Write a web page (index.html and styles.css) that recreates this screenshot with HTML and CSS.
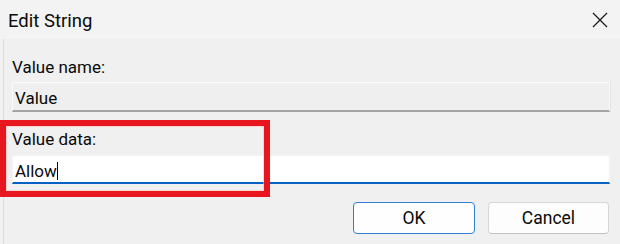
FILE: index.html
```html
<!DOCTYPE html>
<html>
<head>
<meta charset="utf-8">
<link rel="stylesheet" href="styles.css">
</head>
<body>
<div class="window">
  <div class="titlebar">
    <span class="title">Edit String</span>
    <svg class="close" width="16" height="16" viewBox="0 0 16 16"><path d="M1 1 L15 15 M15 1 L1 15" stroke="#1b1b1b" stroke-width="1.3" fill="none"/></svg>
  </div>
  <div class="content">
    <div class="label first">Value name:</div>
    <div class="field readonly">Value</div>
    <div class="label second">Value data:</div>
    <div class="field active">Allow<span class="caret"></span></div>
    <div class="buttons">
      <button class="btn ok">OK</button>
      <button class="btn cancel">Cancel</button>
    </div>
  </div>
  <div class="highlight"></div>
</div>
</body>
</html>
```
FILE: styles.css
```css
html, body {
  margin: 0;
  padding: 0;
  background: #f0f0f0;
}
.window {
  position: relative;
  width: 620px;
  height: 244px;
  overflow: hidden;
  font-family: Roboto, "Liberation Sans", sans-serif;
  color: #0a0a0a;
}
.titlebar {
  height: 39px;
  background: #f3f3f3;
  display: flex;
  align-items: center;
  justify-content: space-between;
  padding: 0 12px 0 8px;
  box-sizing: border-box;
}
.title {
  font-size: 18.5px;
  line-height: 20px;
  margin-top: 2px;
}
.close {
  display: block;
  margin-top: 1px;
}
.content {
  margin-left: 3px;
  border-left: 1px solid #dedede;
  padding: 0 10px 0 8px;
  height: 205px;
}
.label {
  font-size: 17px;
  line-height: 20px;
}
.label.first {
  padding-top: 18px;
}
.label.second {
  margin-top: 17px;
}
.field {
  box-sizing: border-box;
  font-size: 17px;
  line-height: 20px;
  padding: 6px 0 0 2px;
}
.field.readonly {
  margin-top: 5px;
  height: 30px;
  background: #efefef;
  border: 1px solid #fafafa;
  border-bottom: 2px solid #a3a3a3;
  box-shadow: 1px 0 0 #e2e2e2;
  padding-top: 5px;
}
.field.active {
  margin-top: 6px;
  height: 29px;
  background: #ffffff;
  border: 1px solid #f4f4f4;
  border-bottom: 2px solid #0562c2;
  padding-top: 5px;
}
.caret {
  display: inline-block;
  width: 1px;
  height: 18px;
  background: #000;
  vertical-align: -3px;
}
.buttons {
  display: flex;
  justify-content: flex-end;
  gap: 13px;
  margin-top: 18px;
  padding-right: 1px;
}
.btn {
  box-sizing: border-box;
  width: 122px;
  height: 32px;
  border-radius: 4px;
  font-family: Roboto, "Liberation Sans", sans-serif;
  font-size: 17.5px;
  color: #0a0a0a;
  background: #fdfdfd;
  padding: 0;
}
.btn.ok {
  border: 1.5px solid #2f7fd3;
  background: #fefefe;
}
.btn.cancel {
  width: 121px;
  border: 1px solid #d6d6d6;
  border-bottom-color: #c2c2c2;
}
.highlight {
  position: absolute;
  left: 0;
  top: 120px;
  width: 270px;
  height: 77px;
  box-sizing: border-box;
  border: 6px solid #e8161e;
  box-shadow: inset 0 0 0 1px rgba(255, 190, 190, 0.6);
}
```
